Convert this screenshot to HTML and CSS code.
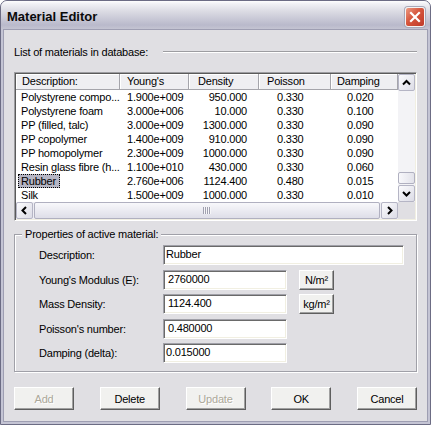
FILE: index.html
```html
<!DOCTYPE html>
<html>
<head>
<meta charset="utf-8">
<title>Material Editor</title>
<link rel="stylesheet" href="styles.css">
</head>
<body>
<div class="window">
  <div class="titlebar">
    <span class="title">Material Editor</span>
    <div class="close">
      <svg width="12" height="12" viewBox="0 0 12 12"><path d="M2 2L10 10M10 2L2 10" stroke="#fff" stroke-width="2.2" stroke-linecap="square"/></svg>
    </div>
  </div>
  <div class="client">
    <div class="sep-row">
      <span class="sep-label">List of materials in database:</span>
      <div class="sep"></div>
    </div>

    <div class="listview">
      <div class="lv-header">
        <div class="hc h1">Description:</div>
        <div class="hc h2">Young's</div>
        <div class="hc h3">Density</div>
        <div class="hc h4">Poisson</div>
        <div class="hc h5">Damping</div>
      </div>
      <div class="lv-body">
        <div class="row"><span class="c d">Polystyrene compo...</span><span class="c y">1.900e+009</span><span class="c den">950.000</span><span class="c p">0.330</span><span class="c dm">0.020</span></div>
        <div class="row"><span class="c d">Polystyrene foam</span><span class="c y">3.000e+006</span><span class="c den">10.000</span><span class="c p">0.330</span><span class="c dm">0.100</span></div>
        <div class="row"><span class="c d">PP (filled, talc)</span><span class="c y">3.000e+009</span><span class="c den">1300.000</span><span class="c p">0.330</span><span class="c dm">0.090</span></div>
        <div class="row"><span class="c d">PP copolymer</span><span class="c y">1.400e+009</span><span class="c den">910.000</span><span class="c p">0.330</span><span class="c dm">0.090</span></div>
        <div class="row"><span class="c d">PP homopolymer</span><span class="c y">2.300e+009</span><span class="c den">1000.000</span><span class="c p">0.330</span><span class="c dm">0.090</span></div>
        <div class="row"><span class="c d">Resin glass fibre (h...</span><span class="c y">1.100e+010</span><span class="c den">430.000</span><span class="c p">0.330</span><span class="c dm">0.060</span></div>
        <div class="row"><span class="c d sel-cell"><span class="sel">Rubber</span></span><span class="c y">2.760e+006</span><span class="c den">1124.400</span><span class="c p">0.480</span><span class="c dm">0.015</span></div>
        <div class="row"><span class="c d">Silk</span><span class="c y">1.500e+009</span><span class="c den">1000.000</span><span class="c p">0.330</span><span class="c dm">0.010</span></div>
      </div>
      <div class="vscroll">
        <div class="sb-btn"><svg width="15" height="15" viewBox="0 0 15 15"><path d="M4 9.5L7.5 6L11 9.5" fill="none" stroke="#000" stroke-width="2"/></svg></div>
        <div class="vtrack-top"></div>
        <div class="vthumb"></div>
        <div class="vtrack-bot"></div>
        <div class="sb-btn"><svg width="15" height="15" viewBox="0 0 15 15"><path d="M4 6L7.5 9.5L11 6" fill="none" stroke="#000" stroke-width="2"/></svg></div>
      </div>
      <div class="hscroll">
        <div class="sb-btn"><svg width="15" height="15" viewBox="0 0 15 15"><path d="M9 4L5.5 7.5L9 11" fill="none" stroke="#000" stroke-width="2"/></svg></div>
        <div class="hthumb"><span class="grip"></span></div>
        <div class="sb-btn"><svg width="15" height="15" viewBox="0 0 15 15"><path d="M6 4L9.5 7.5L6 11" fill="none" stroke="#000" stroke-width="2"/></svg></div>
      </div>
      <div class="corner"></div>
    </div>

    <div class="group">
      <span class="group-title">Properties of active material:</span>
      <div class="props">
        <span class="lbl">Description:</span>
        <div class="edit wide">Rubber</div>

        <span class="lbl">Young's Modulus (E):</span>
        <div class="edit ind">2760000</div>
        <div class="btn unit">N/m²</div>

        <span class="lbl">Mass Density:</span>
        <div class="edit ind">1124.400</div>
        <div class="btn unit">kg/m²</div>

        <span class="lbl">Poisson's number:</span>
        <div class="edit ind">0.480000</div>

        <span class="lbl">Damping (delta):</span>
        <div class="edit">0.015000</div>
      </div>
    </div>

    <div class="buttons">
      <div class="btn cmd disabled">Add</div>
      <div class="btn cmd">Delete</div>
      <div class="btn cmd disabled">Update</div>
      <div class="btn cmd">OK</div>
      <div class="btn cmd">Cancel</div>
    </div>
  </div>
</div>
</body>
</html>
```

FILE: styles.css
```css
* { box-sizing: border-box; }

html, body {
  margin: 0;
  padding: 0;
  background: #ffffff;
}

body {
  width: 431px;
  height: 425px;
  overflow: hidden;
  font-family: "Liberation Sans", Arial, sans-serif;
  font-size: 11px;
  letter-spacing: -0.2px;
  color: #000;
}

.window {
  width: 431px;
  height: 425px;
  border: 1px solid #6c6c84;
  border-radius: 7px 7px 0 0;
  background: #c4c4d4;
  display: flex;
  flex-direction: column;
  overflow: hidden;
}

.titlebar {
  height: 29px;
  flex: none;
  display: flex;
  align-items: center;
  padding: 0 5px 0 6px;
  background: linear-gradient(to bottom, #fefefe 0px, #f0f0f4 3px, #dcdce4 10px, #c8c8d6 18px, #b9b9cb 24px, #c4c4d2 28px);
}

.title {
  flex: 1;
  font-weight: bold;
  font-size: 13px;
  letter-spacing: 0;
  color: #0a0a0a;
  padding-top: 1px;
}

.close {
  width: 20px;
  height: 20px;
  margin-top: 2px;
  border: 1px solid #f4f4f4;
  border-radius: 3px;
  background: linear-gradient(135deg, #ec9a82 0%, #d6553c 45%, #bf3a2a 100%);
  box-shadow: 0 0 0 1px #a8a8b8;
  display: flex;
  align-items: center;
  justify-content: center;
}

.client {
  flex: 1;
  margin: 0 3px 3px;
  background: #e0dfe3;
  box-shadow: 0 0 0 1px #9e9eb2;
  padding: 0 10px;
  display: flex;
  flex-direction: column;
}

.sep-row {
  margin-top: 15px;
  height: 14px;
  display: flex;
  align-items: center;
}

.sep-label {
  width: 149px;
  white-space: nowrap;
}

.sep {
  flex: 1;
  height: 2px;
  border-top: 1px solid #9d9da1;
  border-bottom: 1px solid #ffffff;
}

/* list view */
.listview {
  margin-top: 13px;
  display: grid;
  grid-template-columns: 382px 17px;
  grid-template-rows: 16px 112px 17px;
  border: 1px solid;
  border-color: #9d9da1 #ffffff #ffffff #9d9da1;
  padding: 1px;
  box-shadow: inset 1px 1px 0 #5a5a5a, inset -1px -1px 0 #f1efe2;
}

.lv-header {
  grid-column: 1;
  grid-row: 1;
  display: grid;
  grid-template-columns: 104px 69px 70px 72px 67px;
  background: #efeff2;
}

.hc {
  height: 16px;
  line-height: 15px;
  border-right: 1px solid #a5a5ab;
  border-bottom: 1px solid #a5a5ab;
  box-shadow: inset 1px 1px 0 #ffffff;
  white-space: nowrap;
  overflow: hidden;
}

.h1 { padding-left: 6px; }
.h2 { padding-left: 7px; }
.h3 { padding-left: 9px; }
.h4 { padding-left: 8px; }
.h5 { padding-left: 6px; }

.lv-body {
  grid-column: 1;
  grid-row: 2;
  background: #ffffff;
  overflow: hidden;
}

.row {
  display: grid;
  grid-template-columns: 104px 69px 70px 72px 67px;
  height: 14px;
  line-height: 14px;
}

.c {
  white-space: nowrap;
  overflow: hidden;
}

.d { padding-left: 5px; }
.y { padding-left: 7px; }
.den { text-align: right; padding-right: 12px; }
.p { padding-left: 18px; }
.dm { padding-left: 16px; }

.sel-cell { padding-left: 2px; }

.sel {
  display: inline-block;
  height: 14px;
  line-height: 12px;
  padding: 0 3px 0 2px;
  background: #b6b6c4;
  border: 1px dotted #000;
}

/* scrollbars */
.vscroll {
  grid-column: 2;
  grid-row: 1 / 3;
  display: flex;
  flex-direction: column;
  background: #f3f3f6;
}

.sb-btn {
  width: 17px;
  height: 17px;
  flex: none;
  border: 1px solid #b5b5c5;
  border-radius: 2px;
  background: linear-gradient(to bottom right, #fbfbfd, #dcdce6);
  display: flex;
  align-items: center;
  justify-content: center;
}

.vtrack-top { height: 81px; }

.vthumb {
  height: 12px;
  border: 1px solid #b0b0c0;
  border-radius: 2px;
  background: linear-gradient(to right, #f8f8fb, #e2e2ea);
}

.vtrack-bot { flex: 1; }

.hscroll {
  grid-column: 1;
  grid-row: 3;
  display: flex;
  gap: 1px;
  background: #eeeef3;
}

.hthumb {
  flex: 1;
  border: 1px solid #b0b0c0;
  border-radius: 2px;
  background: linear-gradient(to bottom, #f8f8fb, #dedee8);
  display: flex;
  align-items: center;
  justify-content: center;
}

.grip {
  width: 8px;
  height: 7px;
  background: repeating-linear-gradient(to right, #a0a0b0 0, #a0a0b0 1px, #f6f6f8 1px, #f6f6f8 2px);
}

.corner {
  grid-column: 2;
  grid-row: 3;
  background: #e0dfe3;
}

/* group box */
.group {
  margin-top: 13px;
  border: 1px solid #a0a0a8;
  box-shadow: inset 1px 1px 0 #ffffff, 1px 1px 0 #ffffff;
  padding: 0 12px 8px 24px;
}

.group-title {
  display: block;
  width: max-content;
  margin: -8px 0 0 -17px;
  padding: 0 3px;
  line-height: 14px;
  background: #e0dfe3;
}

.props {
  margin-top: 4px;
  display: grid;
  grid-template-columns: 124px 124px 12px 35px 70px;
  grid-auto-rows: 20px;
  row-gap: 4.5px;
  align-items: center;
}

.lbl {
  grid-column: 1;
  white-space: nowrap;
}

.edit {
  grid-column: 2;
  height: 20px;
  line-height: 16px;
  padding-left: 2px;
  background: #ffffff;
  border: 1px solid;
  border-color: #a0a0a8 #ffffff #ffffff #a0a0a8;
  box-shadow: inset 1px 1px 0 #6a6a6a, inset -1px -1px 0 #f1efe2;
  white-space: nowrap;
  overflow: hidden;
}

.edit.wide { grid-column: 2 / 6; }
.edit.ind { padding-left: 4px; }

.btn {
  display: flex;
  align-items: center;
  justify-content: center;
  background: #f1f1ef;
  border: 1px solid;
  border-color: #ffffff #5e5e5e #5e5e5e #ffffff;
  box-shadow: inset -1px -1px 0 #a0a0a0;
  white-space: nowrap;
}

.unit {
  grid-column: 4;
  height: 20px;
}

.buttons {
  margin-top: 15px;
  display: flex;
  justify-content: space-between;
}

.cmd {
  width: 60px;
  height: 23px;
}

.disabled {
  color: #aca899;
  text-shadow: 1px 1px 0 #ffffff;
}
```
